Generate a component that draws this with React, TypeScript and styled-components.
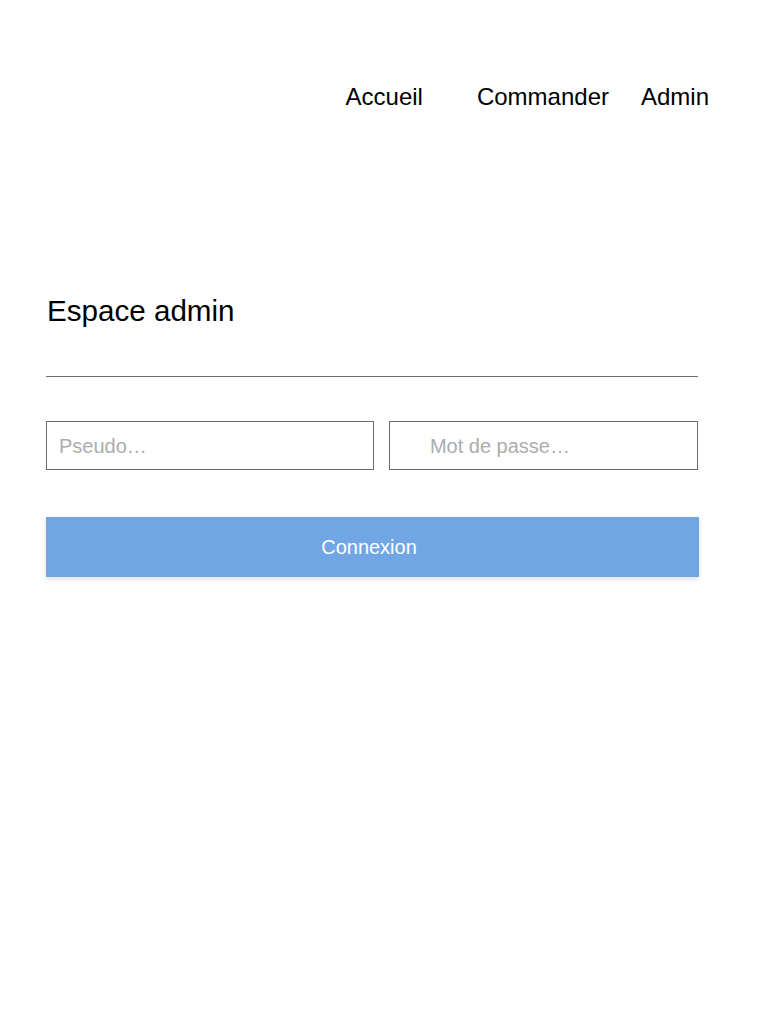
import React from "react";
import styled, { createGlobalStyle } from "styled-components";

const Global = createGlobalStyle`
  html, body { margin: 0; padding: 0; background: #fff; }
  body { font-family: "Liberation Sans", Arial, sans-serif; color: #000; }
  * { box-sizing: border-box; }
`;

const Page = styled.div`
  width: 768px;
  min-height: 1024px;
  background: #fff;
`;

const Nav = styled.nav`
  display: flex;
  justify-content: flex-end;
  align-items: center;
  padding: 83px 59px 0 0;
  height: 110px;
`;

const NavLink = styled.a<{ $gap: number }>`
  font-size: 24px;
  line-height: 28px;
  color: #000;
  text-decoration: none;
  margin-left: ${(p) => p.$gap}px;
`;

const Main = styled.main`
  width: 652px;
  margin: 184px 0 0 46px;
`;

const Title = styled.h1`
  margin: 0 0 0 1px;
  font-size: 29.6px;
  line-height: 34px;
  font-weight: 400;
`;

const Divider = styled.hr`
  margin: 48px 0 0;
  border: none;
  border-top: 1px solid #707070;
  height: 0;
`;

const Fields = styled.div`
  display: flex;
  gap: 15px;
  margin-top: 44px;
`;

const Input = styled.input<{ $width: number; $indent: number }>`
  width: ${(p) => p.$width}px;
  height: 49px;
  border: 1px solid #6b6b6b;
  border-radius: 0;
  padding: 2px 0 0 ${(p) => p.$indent}px;
  font-family: "Liberation Sans", Arial, sans-serif;
  font-size: 20px;
  color: #000;
  outline: none;
  &::placeholder { color: #acacac; }
`;

const Button = styled.button`
  display: block;
  width: 653px;
  height: 60px;
  margin-top: 47px;
  padding: 0 7px 0 0;
  border: none;
  background: #71a6e5;
  color: #fff;
  font-family: "Liberation Sans", Arial, sans-serif;
  font-size: 20px;
  box-shadow: 0 2px 5px rgba(0, 0, 0, 0.14);
  cursor: pointer;
`;

export default function App() {
  return (
    <Page>
      <Global />
      <Nav>
        <NavLink href="#" $gap={0}>Accueil</NavLink>
        <NavLink href="#" $gap={54}>Commander</NavLink>
        <NavLink href="#" $gap={32}>Admin</NavLink>
      </Nav>
      <Main>
        <Title>Espace admin</Title>
        <Divider />
        <Fields>
          <Input $width={329} $indent={12} placeholder="Pseudo…" />
          <Input $width={310} $indent={40} type="password" placeholder="Mot de passe…" />
        </Fields>
        <Button>Connexion</Button>
      </Main>
    </Page>
  );
}
